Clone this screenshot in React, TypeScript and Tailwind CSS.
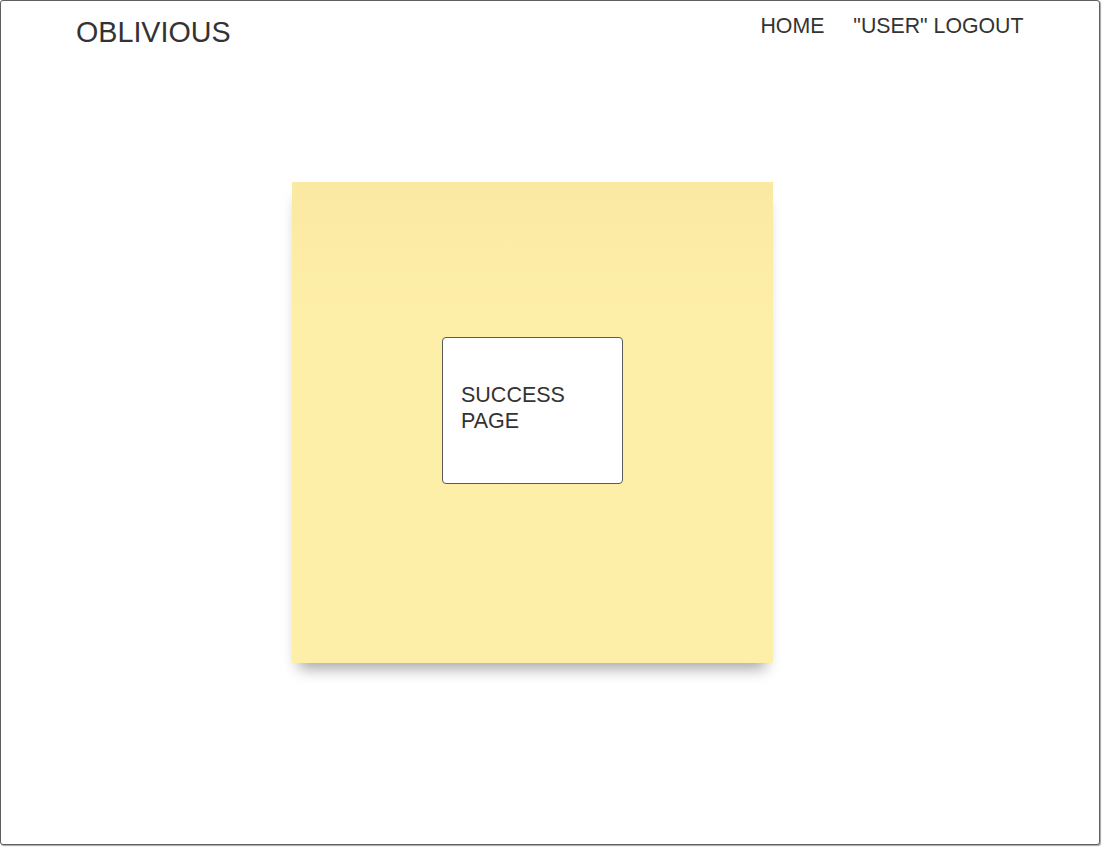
import React from 'react';

const App: React.FC = () => {
  return (
    <div className="w-[1104px] h-[848px] bg-white" style={{ fontFamily: '"Liberation Sans", Arial, sans-serif' }}>
      {/* page frame */}
      <div className="w-[1100px] h-[845px] border-[1.5px] border-[#5f5f5f] rounded-[3px] bg-white shadow-[1px_1px_1px_rgba(0,0,0,0.35)] text-[#333333]">
        <header className="flex items-start justify-between pl-[75px] pr-[75.5px]">
          <div className="mt-[16.5px] text-[28.7px] leading-none">OBLIVIOUS</div>
          <nav className="mt-[14.5px] flex gap-[29px] text-[21.3px] leading-none">
            <span>HOME</span>
            <span>"USER" LOGOUT</span>
          </nav>
        </header>

        {/* sticky note */}
        <div className="ml-[290.5px] mt-[135.3px] w-[481px] h-[481px] pl-[150px] pt-[155px] bg-linear-to-b from-[#fae9a2] to-[#feefa8] to-30% shadow-[0_13px_14px_-7px_rgba(0,0,0,0.32),-4px_6px_18px_-6px_rgba(0,0,0,0.05)]">
          <div className="w-[181px] h-[147px] border-[1.5px] border-[#5a5a5a] rounded-[4px] bg-white pl-[18.5px] pt-[44px] text-[21.5px] leading-[26px]">
            SUCCESS
            <br />
            PAGE
          </div>
        </div>
      </div>
    </div>
  );
};

export default App;
